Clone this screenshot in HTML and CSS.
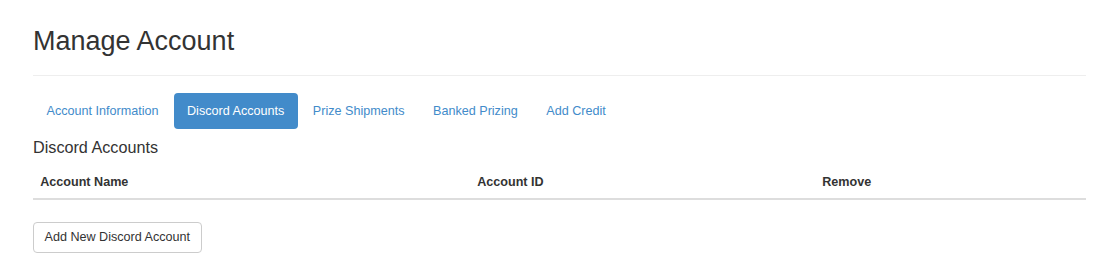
FILE: index.html
```html
<!DOCTYPE html>
<html lang="en">
<head>
  <meta charset="UTF-8">
  <meta name="viewport" content="width=device-width, initial-scale=1.0">
  <title>Manage Account</title>
  <link rel="stylesheet" href="styles.css">
</head>
<body>
  <div class="container">
    <div class="page-header">
      <h1>Manage Account</h1>
    </div>

    <ul class="nav-pills">
      <li><a href="#">Account Information</a></li>
      <li class="active"><a href="#">Discord Accounts</a></li>
      <li><a href="#">Prize Shipments</a></li>
      <li><a href="#">Banked Prizing</a></li>
      <li><a href="#">Add Credit</a></li>
    </ul>

    <h4 class="section-title">Discord Accounts</h4>
    <table class="table">
      <thead>
        <tr>
          <th class="col-name">Account Name</th>
          <th class="col-id">Account ID</th>
          <th>Remove</th>
        </tr>
      </thead>
      <tbody></tbody>
    </table>

    <button class="btn">Add New Discord Account</button>
  </div>
</body>
</html>
```

FILE: styles.css
```css
* {
  margin: 0;
  padding: 0;
  box-sizing: border-box;
}

body {
  font-family: "Liberation Sans", Arial, sans-serif;
  font-size: 12.6px;
  line-height: 1.42857;
  color: #333;
  background-color: #fff;
}

.container {
  padding: 9px 22px 0 33px;
}

.page-header {
  padding-bottom: 9px;
  margin-bottom: 17px;
  border-bottom: 1px solid #eee;
}

.page-header h1 {
  margin-top: 18px;
  margin-bottom: 9px;
  font-size: 27px;
  font-weight: 500;
  line-height: 1.1;
}

.nav-pills {
  list-style: none;
  display: flex;
  gap: 1.5px;
}

.nav-pills a {
  display: block;
  padding: 9px 13.5px;
  line-height: 18px;
  border-radius: 4px;
  color: #428bca;
  text-decoration: none;
}

.nav-pills .active a {
  background-color: #428bca;
  color: #fff;
}

.section-title {
  margin-top: 10px;
  margin-bottom: 9px;
  font-size: 16.2px;
  font-weight: 500;
  line-height: 1.1;
}

.table {
  width: 100%;
  border-collapse: collapse;
  margin-bottom: 22px;
}

.table th {
  text-align: left;
  padding: 7px 7.2px;
  line-height: 18px;
  font-weight: bold;
  border-bottom: 2px solid #ddd;
}

.col-name {
  width: 437px;
}

.col-id {
  width: 345px;
}

.btn {
  font-family: inherit;
  font-size: 12.6px;
  line-height: 18px;
  color: #333;
  background-color: #fff;
  border: 1px solid #ccc;
  border-radius: 4px;
  padding: 5.5px 10.5px;
  cursor: pointer;
}
```
